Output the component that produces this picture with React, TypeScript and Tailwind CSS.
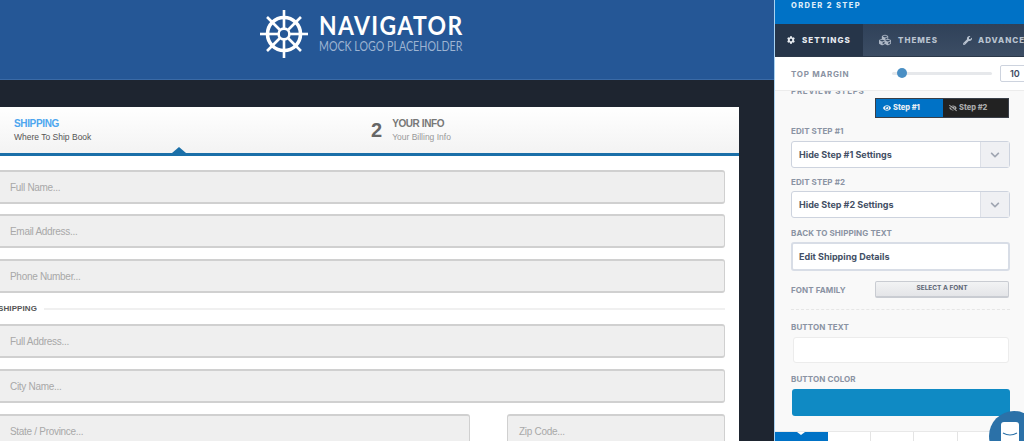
import React from "react";
import { FaCog, FaWrench, FaCubes, FaEye, FaEyeSlash, FaChevronDown } from "react-icons/fa";

function Wheel() {
  const spokes = [0, 45, 90, 135, 180, 225, 270, 315];
  return (
    <svg width="50" height="50" viewBox="0 0 50 50" className="shrink-0">
      <circle cx="25" cy="25" r="16.5" fill="none" stroke="#fff" strokeWidth="3.6" />
      <circle cx="25" cy="25" r="5.4" fill="none" stroke="#fff" strokeWidth="2.6" />
      {spokes.map((a) => (
        <g key={a} transform={`rotate(${a} 25 25)`}>
          <line x1="25" y1="19" x2="25" y2="1" stroke="#fff" strokeWidth="2.6" />
        </g>
      ))}
    </svg>
  );
}

function Field({ text, className = "" }: { text: string; className?: string }) {
  return (
    <div
      className={`h-[34px] shrink-0 rounded-[3px] border border-[#d0d0d0] border-t-2 border-b-2 bg-[#efefef] pl-[11px] flex items-center text-[10px] tracking-[-0.3px] text-[#a8a8a8] font-['Liberation_Sans',sans-serif] ${className}`}
    >
      {text}
    </div>
  );
}

function Label({ children, className = "" }: { children: React.ReactNode; className?: string }) {
  return (
    <div className={`text-[8px] font-bold tracking-[0.1px] text-[#8a93a3] font-['Inter',sans-serif] leading-[10px] ${className}`}>
      {children}
    </div>
  );
}

function SelectRow({ text }: { text: string }) {
  return (
    <div className="ml-[16px] mr-[14px] flex h-[27px] shrink-0 rounded-[3px] border border-[#cdd3de] bg-white">
      <div className="flex-1 pl-[7px] flex items-center text-[9px] font-bold text-[#434f65] font-['Inter',sans-serif]">{text}</div>
      <div className="w-[29px] border-l border-[#dcdfe6] bg-[#eff0f3] flex items-center justify-center">
        <FaChevronDown size={10} className="text-[#a0a6b2]" />
      </div>
    </div>
  );
}

export default function App() {
  return (
    <div className="flex h-[441px] w-[1024px] overflow-hidden bg-[#1e2530] font-['Liberation_Sans',sans-serif]">
      <div className="w-[774px] shrink-0 flex flex-col">
        <header className="h-[80px] shrink-0 bg-[#255796] border-b border-[#3a6aa6] flex items-center justify-center gap-[10px] pb-[12px] pr-[54px]">
          <Wheel />
          <div className="flex flex-col w-[143px] font-['Lato',sans-serif]">
            <div className="text-[27px] leading-[22px] font-bold tracking-[1.6px] text-white whitespace-nowrap origin-left scale-x-[0.85]">NAVIGATOR</div>
            <div className="text-[13.5px] leading-[15px] mt-[3px] tracking-[0px] text-[#9db4d2] whitespace-nowrap origin-left scale-x-[0.79]">MOCK LOGO PLACEHOLDER</div>
          </div>
        </header>
        <main className="pt-[27px] flex-1 overflow-hidden">
          <div className="ml-[-12px] w-[751px] rounded-t-[3px] bg-white pb-4">
            <div className="relative h-[49px] bg-gradient-to-b from-white to-[#f3f3f3] border-b-[3px] border-[#1a6fa8] flex">
              <div className="w-[372px] relative pl-[26px] pt-[11px]">
                <div className="absolute left-[9px] top-[14px] w-[3px] h-[13px] bg-[#4a94d0]" />
                <div className="text-[10px] tracking-[-0.35px] font-bold leading-[12px] text-[#4da6ef]">SHIPPING</div>
                <div className="text-[8.5px] leading-[12px] mt-[1px] text-[#555]">Where To Ship Book</div>
                <div className="absolute left-[184px] bottom-0 w-0 h-0 border-x-[7px] border-x-transparent border-b-[6px] border-b-[#1a6fa8]" />
              </div>
              <div className="flex gap-[10px] pt-[11px] pl-[11px]">
                <div className="text-[20px] font-bold leading-[20px] mt-[2px] text-[#666]">2</div>
                <div>
                  <div className="text-[10px] tracking-[-0.4px] font-bold leading-[12px] text-[#777]">YOUR INFO</div>
                  <div className="text-[8.5px] leading-[12px] mt-[1px] text-[#999]">Your Billing Info</div>
                </div>
              </div>
            </div>
            <div className="pl-[10px] pr-[14px] pt-[14px] flex flex-col">
              <Field text="Full Name..." />
              <Field text="Email Address..." className="mt-[10px]" />
              <Field text="Phone Number..." className="mt-[11px]" />
              <div className="h-[31px] flex items-center gap-[7px] pl-0">
                <span className="text-[8px] font-bold tracking-[0.1px] text-[#555]">SHIPPING</span>
                <div className="flex-1 h-[2px] bg-[#f0f0f0]" />
              </div>
              <Field text="Full Address..." />
              <Field text="City Name..." className="mt-[11px]" />
              <div className="mt-[11px] flex gap-[37px]">
                <Field text="State / Province..." className="w-[472px]" />
                <Field text="Zip Code..." className="flex-1" />
              </div>
            </div>
          </div>
        </main>
      </div>

      <aside className="relative w-[250px] shrink-0 flex flex-col bg-[#f9f9f9] border-l border-[#a8d2f2] overflow-hidden">
        <div className="h-[24px] shrink-0 bg-[#0072c6] pl-[16px] text-[7.5px] leading-[12px] font-extrabold tracking-[1.4px] text-[#dcecf8] font-['Inter',sans-serif]">ORDER 2 STEP</div>
        <div className="h-[33px] shrink-0 flex bg-gradient-to-b from-[#2f4159] to-[#3c4d64] text-[8px] font-extrabold tracking-[1px] text-[#b9c3d0] font-['Inter',sans-serif] border-b border-[#2b3849]">
          <div className="w-[88px] shrink-0 bg-[#263549] flex items-center gap-[7px] pl-[12px] text-[#e7ebf0]">
            <FaCog size={8} />
            SETTINGS
          </div>
          <div className="w-[84px] shrink-0 flex items-center gap-[7px] pl-[16px]">
            <FaCubes size={12} className="text-[#aeb8c6]" />
            THEMES
          </div>
          <div className="shrink-0 flex items-center gap-[6px] pl-[16px] whitespace-nowrap">
            <FaWrench size={9} />
            ADVANCED
          </div>
        </div>
        <div className="h-[34px] shrink-0 bg-white border-b border-[#ececec] flex items-center pl-[16px]">
          <Label className="w-[101px] shrink-0 tracking-[0.7px]">TOP MARGIN</Label>
          <div className="relative w-[100px] shrink-0 h-[3px] rounded bg-[#e6e8eb]">
            <div className="absolute left-[5px] top-[-4px] w-[10px] h-[10px] rounded-full bg-[#4a8fc4]" />
          </div>
          <div className="ml-[8px] w-[30px] shrink-0 h-[17px] rounded-[2px] border border-[#cdd3de] bg-white pl-[9px] text-[9px] font-semibold leading-[15px] text-[#3d4a5f] font-['Inter',sans-serif]">10</div>
        </div>
        <div className="relative h-[31px] shrink-0 overflow-hidden">
          <Label className="absolute left-[16px] top-[-5px] tracking-[0.7px]">PREVIEW STEPS</Label>
          <div className="absolute left-[100px] top-[7px] flex h-[20px] w-[134px] border border-[#3a3f48] text-[7.5px] font-extrabold text-[#e9eef3] font-['Inter',sans-serif]">
            <div className="w-[67px] bg-[#0072c6] flex items-center gap-[2px] pl-[7px]"><FaEye size={8} />Step #1</div>
            <div className="flex-1 bg-[#222] flex items-center gap-[2px] pl-[6px] text-[#aaa]"><FaEyeSlash size={8} />Step #2</div>
          </div>
        </div>
        <Label className="ml-[16px] mt-[4px] mb-[5px]">EDIT STEP #1</Label>
        <SelectRow text="Hide Step #1 Settings" />
        <Label className="ml-[16px] mt-[9px] mb-[4px]">EDIT STEP #2</Label>
        <SelectRow text="Hide Step #2 Settings" />
        <Label className="ml-[16px] mt-[10px] mb-[4px]">BACK TO SHIPPING TEXT</Label>
        <div className="ml-[16px] mr-[14px] h-[29px] shrink-0 rounded-[3px] border-2 border-[#d8dde6] bg-white pl-[6px] flex items-center text-[9px] font-bold text-[#434f65] font-['Inter',sans-serif]">Edit Shipping Details</div>
        <div className="flex items-center mt-[10px] pl-[16px]">
          <Label className="w-[84px] shrink-0">FONT FAMILY</Label>
          <div className="w-[134px] h-[17px] rounded-[2px] border border-[#c9ccd2] border-b-2 bg-gradient-to-b from-[#f2f3f4] to-[#e4e5e8] flex items-center justify-center text-[6.5px] font-bold text-[#5d6675] font-['Inter',sans-serif]">SELECT A FONT</div>
        </div>
        <div className="ml-[16px] mr-[14px] mt-[11px] border-t border-dashed border-[#e6e6e6]" />
        <Label className="ml-[16px] mt-[12px] mb-[5px]">BUTTON TEXT</Label>
        <div className="ml-[18px] mr-[15px] h-[26px] shrink-0 rounded-[3px] border border-[#ececec] bg-white" />
        <Label className="ml-[16px] mt-[11px] mb-[5px]">BUTTON COLOR</Label>
        <div className="ml-[17px] mr-[14px] h-[27px] shrink-0 rounded-[3px] bg-[#0f8ac4]" />
        <div className="absolute left-0 bottom-0 right-0 h-[10px] flex bg-white border-t border-[#e8e8e8]">
          <div className="relative w-[53px] bg-[#0072c6]">
            <div className="absolute left-[22px] top-0 w-0 h-0 border-x-[4px] border-x-transparent border-t-[3px] border-t-white" />
          </div>
          <div className="w-[43px] border-r border-[#e4e4e4]" />
          <div className="w-[43px] border-r border-[#e4e4e4]" />
          <div className="w-[44px] border-r border-[#e4e4e4]" />
        </div>
        <div className="absolute left-[214px] top-[411px] w-[50px] h-[50px] rounded-full bg-[#2b71a8]">
          <div className="absolute left-[12px] top-[11px] w-[18px] h-[30px] rounded-[3px] bg-white">
            <svg width="18" height="8" viewBox="0 0 18 8" className="absolute left-0 top-[10px]">
              <path d="M2 1Q9 5 16 1" fill="none" stroke="#2b71a8" strokeWidth="1.2" />
            </svg>
          </div>
        </div>
      </aside>
    </div>
  );
}
